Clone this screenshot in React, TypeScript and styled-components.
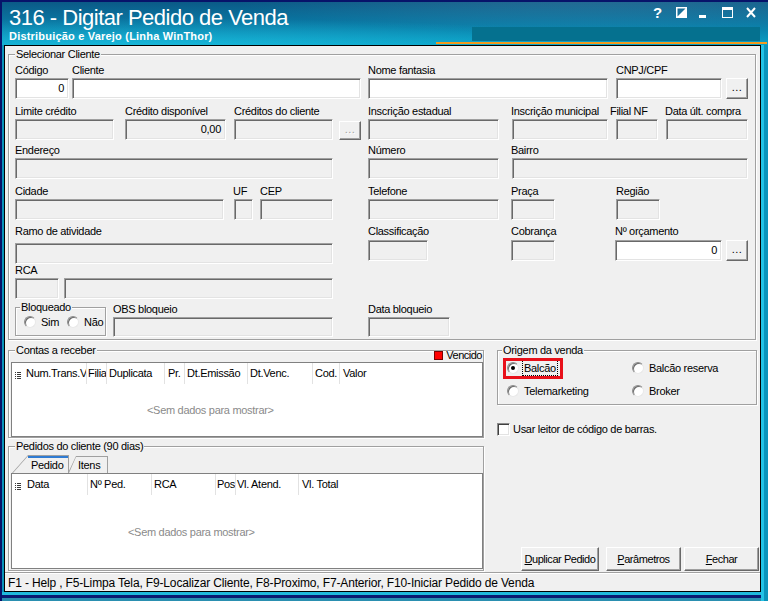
import React from "react";
import styled, { createGlobalStyle, css } from "styled-components";

const GlobalStyle = createGlobalStyle`
  html, body {
    margin: 0;
    padding: 0;
  }
  body {
    background: #0b8db4;
    font-family: "Liberation Sans", Arial, sans-serif;
    font-size: 11px;
    letter-spacing: -0.3px;
    color: #000;
  }
  * {
    box-sizing: border-box;
  }
`;

/* ---------- window chrome ---------- */

const Window = styled.div`
  width: 768px;
  height: 601px;
  overflow: hidden;
  display: flex;
  flex-direction: column;
  border-top: 2px solid #07136a;
  border-left: 2px solid #07136a;
  background:
    linear-gradient(#22c3e6, #22c3e6) 759px 0 / 3px 100% no-repeat,
    #0b94bb;
`;

const TitleBar = styled.div`
  flex: none;
  height: 43px;
  display: flex;
  justify-content: space-between;
  padding: 4px 12px 0 7px;
  color: #fff;
  background:
    linear-gradient(#f39a1e, #f39a1e) 434px 40px / 331px 2px no-repeat,
    linear-gradient(#05718f, #05718f) 470px 25px / 288px 14px no-repeat,
    radial-gradient(ellipse 520px 30px at 140px 46px, rgba(40, 205, 235, 0.55), rgba(40, 205, 235, 0) 100%),
    radial-gradient(ellipse 380px 40px at 600px -8px, rgba(255, 255, 255, 0.12), rgba(255, 255, 255, 0) 100%),
    linear-gradient(180deg, #0b5a87 0%, #0a79a4 50%, #08a0c6 100%);
`;

const TitleTexts = styled.div`
  display: flex;
  flex-direction: column;
`;

const Title = styled.div`
  font-size: 22px;
  line-height: 24px;
  letter-spacing: -0.5px;
`;

const Subtitle = styled.div`
  font-size: 11px;
  line-height: 13px;
  font-weight: bold;
  letter-spacing: 0.2px;
`;

const WinButtons = styled.div`
  display: flex;
  align-items: flex-start;
  margin-top: 1px;
`;

const WinIcon = styled.div<{ $ml?: number; $mt?: number }>`
  display: flex;
  margin-left: ${(p) => p.$ml ?? 0}px;
  margin-top: ${(p) => p.$mt ?? 0}px;
`;

const HelpGlyph = styled.div`
  width: 8px;
  height: 11px;
  font-size: 15px;
  line-height: 12px;
  font-weight: bold;
  letter-spacing: 0;
  text-align: center;
`;

const BottomEdge = styled.div`
  flex: 1;
  margin-right: 7px;
  background: linear-gradient(180deg, #1fb9dc 0 3px, #0a1a72 3px 6px, #2a8fb0 6px);
`;

/* ---------- client area ---------- */

const Client = styled.div`
  flex: none;
  margin-left: 2px;
  width: 757px;
  height: 547px;
  border: 1px solid #000;
  background: #f0f0f0;
  display: flex;
  flex-direction: column;
  padding: 2px 0 0 3px;
`;

const Group = styled.fieldset<{ $w: number; $pad: string; $h?: number; $mt?: number }>`
  flex: none;
  margin: ${(p) => p.$mt ?? 0}px 0 0 0;
  min-width: 0;
  width: ${(p) => p.$w}px;
  ${(p) => p.$h && `height: ${p.$h}px;`}
  padding: ${(p) => p.$pad};
  border: 1px solid #a0a0a0;
  box-shadow: inset 1px 1px 0 #fff, 1px 1px 0 #fff;
`;

const Legend = styled.legend<{ $ml?: number }>`
  padding: 0 1px;
  margin-left: ${(p) => p.$ml ?? 0}px;
  line-height: 13px;
  background: #f0f0f0;
  white-space: nowrap;
`;

const FormCols = styled.div`
  display: flex;
  gap: 7px;
`;

const Col = styled.div<{ $w: number }>`
  width: ${(p) => p.$w}px;
  display: flex;
  flex-direction: column;
`;

const Row = styled.div<{ $mt?: number; $top?: boolean }>`
  display: flex;
  align-items: ${(p) => (p.$top ? "flex-start" : "flex-end")};
  margin-top: ${(p) => p.$mt ?? 0}px;
`;

const FieldBox = styled.div<{ $w: number; $ml: number; $mt: number }>`
  flex: none;
  display: flex;
  flex-direction: column;
  width: ${(p) => p.$w}px;
  margin-left: ${(p) => p.$ml}px;
  margin-top: ${(p) => p.$mt}px;
`;

const Label = styled.div<{ $gap: number; $lx: number }>`
  height: 13px;
  line-height: 13px;
  margin-bottom: ${(p) => p.$gap}px;
  margin-left: ${(p) => p.$lx}px;
  white-space: nowrap;
`;

const Input = styled.div<{ $on?: boolean; $h: number }>`
  height: ${(p) => p.$h}px;
  border: 1px solid;
  border-color: #a0a0a0 #fff #fff #a0a0a0;
  box-shadow: inset 1px 1px 0 #696969, inset -1px -1px 0 #e3e3e3;
  background: ${(p) => (p.$on ? "#fff" : "#f0f0f0")};
  text-align: right;
  padding: 0 4px;
  line-height: ${(p) => p.$h - 2}px;
`;

const raised = css`
  border: 1px solid;
  border-color: #fff #696969 #696969 #fff;
  box-shadow: inset -1px -1px 0 #a0a0a0;
  background: #f0f0f0;
`;

const DotsButton = styled.div<{ $ml: number; $off?: boolean; $h?: number }>`
  ${raised};
  flex: none;
  width: 22px;
  height: ${(p) => p.$h ?? 21}px;
  margin-left: ${(p) => p.$ml}px;
  text-align: center;
  line-height: ${(p) => (p.$h ?? 21) - 4}px;
  letter-spacing: 0.5px;
  color: ${(p) => (p.$off ? "#a0a0a0" : "#000")};
  text-shadow: ${(p) => (p.$off ? "1px 1px 0 #fff" : "none")};
`;

type FieldProps = {
  label?: string;
  w: number;
  ml?: number;
  mt?: number;
  gap?: number;
  h?: number;
  lx?: number;
  on?: boolean;
  value?: string;
};

function Field({ label, w, ml = 0, mt = 0, gap = 1, h = 21, lx = 0, on, value }: FieldProps) {
  return (
    <FieldBox $w={w} $ml={ml} $mt={mt}>
      <Label $gap={gap} $lx={lx}>
        {label}
      </Label>
      <Input $on={on} $h={h}>
        {value}
      </Input>
    </FieldBox>
  );
}

/* ---------- radios & checkbox ---------- */

const RadioRow = styled.div<{ $ml?: number }>`
  display: flex;
  align-items: center;
  height: 16px;
  margin-left: ${(p) => p.$ml ?? 0}px;
  gap: 8px;
`;

const RadioGrid = styled.div`
  display: grid;
  grid-template-columns: 125px auto;
  row-gap: 7px;
  margin-left: 5px;
`;

const RadioItem = styled.div`
  position: relative;
  display: inline-flex;
  align-items: center;
  height: 16px;
  gap: 5px;
  white-space: nowrap;
`;

const RadioDot = styled.span<{ $on?: boolean }>`
  flex: none;
  width: 12px;
  height: 12px;
  border-radius: 50%;
  background: #fff;
  border: 1px solid;
  border-color: #8c8c8c #e8e8e8 #e8e8e8 #8c8c8c;
  box-shadow: inset 1px 1px 0 #6a6a6a;
  display: flex;
  align-items: center;
  justify-content: center;
  &::after {
    content: "";
    width: 4px;
    height: 4px;
    border-radius: 50%;
    background: ${(p) => (p.$on ? "#000" : "transparent")};
  }
`;

const FocusText = styled.span`
  outline: 1px dotted #000;
  outline-offset: 1px;
`;

const Highlight = styled.div`
  position: absolute;
  left: -4px;
  top: -2px;
  width: 60px;
  height: 21px;
  border: 3px solid #e8101a;
`;

const CheckRow = styled.div`
  display: flex;
  align-items: center;
  height: 16px;
  margin-top: 16px;
  gap: 3px;
`;

const CheckBox = styled.span`
  flex: none;
  width: 13px;
  height: 13px;
  background: #fff;
  border: 1px solid;
  border-color: #8c8c8c #fff #fff #8c8c8c;
  box-shadow: inset 1px 1px 0 #404040, inset -1px -1px 0 #e3e3e3;
`;

/* ---------- lower panels ---------- */

const Bottom = styled.div`
  flex: none;
  display: flex;
  height: 228px;
  margin-top: 4px;
`;

const Stack = styled.div<{ $w: number; $ml?: number }>`
  width: ${(p) => p.$w}px;
  margin-left: ${(p) => p.$ml ?? 0}px;
  display: flex;
  flex-direction: column;
`;

const VencidoRow = styled.div`
  display: flex;
  justify-content: flex-end;
  align-items: center;
  height: 12px;
  margin-top: -8px;
  gap: 3px;
  padding-right: 1px;
  letter-spacing: -0.5px;
`;

const RedSquare = styled.span`
  width: 9px;
  height: 9px;
  background: #ff0000;
  border: 1px solid #7a0000;
`;

const Grid = styled.div<{ $h: number; $mt?: number }>`
  flex: none;
  height: ${(p) => p.$h}px;
  margin-top: ${(p) => p.$mt ?? 0}px;
  background: #fff;
  border: 1px solid #808080;
  display: flex;
  flex-direction: column;
`;

const GridHead = styled.div`
  display: flex;
  height: 21px;
`;

const HeadCell = styled.div<{ $w?: number; $pl?: number }>`
  flex: ${(p) => (p.$w ? "none" : "1")};
  width: ${(p) => (p.$w ? `${p.$w}px` : "auto")};
  padding-left: ${(p) => p.$pl ?? 2}px;
  padding-top: 4px;
  line-height: 13px;
  white-space: nowrap;
  overflow: hidden;
  border-right: ${(p) => (p.$w ? "1px solid #e2e2e2" : "none")};
`;

const IconCell = styled.div`
  flex: none;
  width: 12px;
  padding: 7px 0 0 3px;
`;

const Empty = styled.div<{ $pl: number }>`
  flex: 1;
  display: flex;
  align-items: center;
  padding-left: ${(p) => p.$pl}px;
  color: #8a8a8a;
`;

const Tabs = styled.div`
  display: flex;
  align-items: flex-end;
  height: 19px;
  margin-left: 1px;
`;

const Tab = styled.div<{ $w: number; $h: number; $slant: number; $pl: number; $active?: boolean; $ml?: number }>`
  position: relative;
  z-index: ${(p) => (p.$active ? 1 : 0)};
  flex: none;
  width: ${(p) => p.$w}px;
  height: ${(p) => p.$h}px;
  margin-left: ${(p) => p.$ml ?? 0}px;
  padding-left: ${(p) => p.$pl}px;
  background: #a0a0a0;
  clip-path: polygon(0 100%, ${(p) => p.$slant}px 0, 100% 0, 100% 100%);
  &::before {
    content: "";
    position: absolute;
    left: 1px;
    top: 1px;
    right: 1px;
    bottom: 0;
    background: #f0f0f0;
    clip-path: polygon(0 100%, ${(p) => p.$slant - 1}px 0, 100% 0, 100% 100%);
  }
  ${(p) =>
    p.$active &&
    css`
      &::after {
        content: "";
        position: absolute;
        top: 1px;
        left: ${p.$slant}px;
        right: 1px;
        height: 2px;
        background: #2f7bd2;
      }
    `}
`;

const TabText = styled.span<{ $top: number }>`
  position: relative;
  display: block;
  padding-top: ${(p) => p.$top}px;
  line-height: 13px;
`;

const ButtonRow = styled.div`
  display: flex;
  justify-content: flex-end;
  margin-top: auto;
  margin-bottom: 1px;
`;

const PushButton = styled.div<{ $w: number; $ml?: number }>`
  ${raised};
  width: ${(p) => p.$w}px;
  height: 24px;
  margin-left: ${(p) => p.$ml ?? 0}px;
  display: flex;
  align-items: center;
  justify-content: center;
  white-space: nowrap;
  letter-spacing: -0.45px;
  u {
    text-decoration: underline;
  }
`;

const StatusBar = styled.div`
  flex: none;
  height: 19px;
  margin-left: -3px;
  padding: 3px 0 0 3px;
  border-top: 1px solid #a0a0a0;
  box-shadow: inset 0 1px 0 #fff;
  font-size: 12px;
  line-height: 14px;
  letter-spacing: -0.15px;
  white-space: nowrap;
`;

const ListIcon = () => (
  <svg width="6" height="8" viewBox="0 0 6 8">
    {[0, 2, 4, 6].map((y) => (
      <g key={y} fill="#3a3a3a">
        <rect x="0" y={y} width="1" height="1" />
        <rect x="2" y={y} width="4" height="1" />
      </g>
    ))}
  </svg>
);

const contasCols = [
  { t: "Num.Trans.Venda", w: 63 },
  { t: "Filial", w: 20, pl: 1 },
  { t: "Duplicata", w: 58 },
  { t: "Pr.", w: 20, pl: 3 },
  { t: "Dt.Emissão", w: 63 },
  { t: "Dt.Venc.", w: 65 },
  { t: "Cod.", w: 27 },
  { t: "Valor", pl: 3 },
];

const pedidoCols = [
  { t: "Data", w: 64, pl: 3 },
  { t: "Nº Ped.", w: 64 },
  { t: "RCA", w: 64 },
  { t: "Posição", w: 20, pl: 1 },
  { t: "Vl. Atend.", w: 63, pl: 1 },
  { t: "Vl. Total", pl: 3 },
];

export default function App() {
  return (
    <>
      <GlobalStyle />
      <Window>
        <TitleBar>
          <TitleTexts>
            <Title>316 - Digitar Pedido de Venda</Title>
            <Subtitle>Distribuição e Varejo (Linha WinThor)</Subtitle>
          </TitleTexts>
          <WinButtons>
            <HelpGlyph>?</HelpGlyph>
            <WinIcon $ml={15}>
              <svg width="11" height="11" viewBox="0 0 11 11">
                <rect x="0.75" y="0.75" width="9.5" height="9.5" fill="none" stroke="#fff" strokeWidth="1.5" />
                <polygon points="10,1 10,10 1,10" fill="#fff" />
              </svg>
            </WinIcon>
            <WinIcon $ml={12} $mt={8}>
              <svg width="7" height="3" viewBox="0 0 7 3">
                <rect width="7" height="3" fill="#fff" />
              </svg>
            </WinIcon>
            <WinIcon $ml={16}>
              <svg width="11" height="11" viewBox="0 0 11 11">
                <rect x="0.5" y="0.5" width="10" height="10" fill="none" stroke="#fff" strokeWidth="1" />
                <rect x="0" y="0" width="11" height="3" fill="#fff" />
              </svg>
            </WinIcon>
            <WinIcon $ml={13}>
              <svg width="10" height="11" viewBox="0 0 10 11">
                <path d="M1 1 L9 10 M9 1 L1 10" stroke="#fff" strokeWidth="2" />
              </svg>
            </WinIcon>
          </WinButtons>
        </TitleBar>

        <Client>
          <Group $w={748} $pad="3px 6px 2px 6px">
            <Legend>Selecionar Cliente</Legend>
            <FormCols>
              <Col $w={346}>
                <Row>
                  <Field label="Código" w={54} on value="0" />
                  <Field label="Cliente" w={289} ml={3} on />
                </Row>
                <Row $mt={6}>
                  <Field label="Limite crédito" w={99} />
                  <Field label="Crédito disponível" w={101} ml={11} value="0,00" />
                  <Field label="Créditos do cliente" w={99} ml={8} />
                  <DotsButton $ml={6} $h={19} $off>
                    ...
                  </DotsButton>
                </Row>
                <Row $mt={4}>
                  <Field label="Endereço" w={318} />
                </Row>
                <Row $mt={6}>
                  <Field label="Cidade" w={209} />
                  <Field label="UF" w={19} ml={10} lx={-1} />
                  <Field label="CEP" w={73} ml={7} />
                </Row>
                <Row $mt={5}>
                  <Field label="Ramo de atividade" w={318} gap={5} />
                </Row>
                <Row>
                  <Field label="RCA" w={44} />
                  <Field w={269} ml={5} />
                </Row>
                <Row $mt={2} $top>
                  <Group $w={91} $h={35} $pad="0 0 0 4px">
                    <Legend>Bloqueado</Legend>
                    <RadioRow $ml={4}>
                      <RadioItem>
                        <RadioDot />
                        Sim
                      </RadioItem>
                      <RadioItem>
                        <RadioDot />
                        Não
                      </RadioItem>
                    </RadioRow>
                  </Group>
                  <Field label="OBS bloqueio" w={220} ml={7} mt={2} h={20} />
                </Row>
              </Col>

              <Col $w={380}>
                <Row>
                  <Field label="Nome fantasia" w={240} on />
                  <Field label="CNPJ/CPF" w={106} ml={8} on />
                  <DotsButton $ml={4}>...</DotsButton>
                </Row>
                <Row $mt={6}>
                  <Field label="Inscrição estadual" w={131} />
                  <Field label="Inscrição municipal" w={96} ml={13} lx={-1} />
                  <Field label="Filial NF" w={42} ml={8} lx={-6} />
                  <Field label="Data últ. compra" w={82} ml={8} lx={-1} />
                </Row>
                <Row $mt={4}>
                  <Field label="Número" w={131} />
                  <Field label="Bairro" w={236} ml={13} lx={-1} />
                </Row>
                <Row $mt={6}>
                  <Field label="Telefone" w={131} />
                  <Field label="Praça" w={44} ml={12} />
                  <Field label="Região" w={44} ml={61} />
                </Row>
                <Row $mt={5}>
                  <Field label="Classificação" w={60} gap={2} />
                  <Field label="Cobrança" w={44} ml={83} gap={2} />
                  <Field label="Nº orçamento" w={107} ml={60} gap={2} on value="0" />
                  <DotsButton $ml={4}>...</DotsButton>
                </Row>
                <Row $mt={42}>
                  <Field label="Data bloqueio" w={82} h={20} />
                </Row>
              </Col>
            </FormCols>
          </Group>

          <Bottom>
            <Stack $w={476}>
              <Group $w={476} $pad="0 0 0 2px">
                <Legend $ml={4}>Contas a receber</Legend>
                <VencidoRow>
                  <RedSquare />
                  Vencido
                </VencidoRow>
                <Grid $h={75} $mt={1}>
                  <GridHead>
                    <IconCell>
                      <ListIcon />
                    </IconCell>
                    {contasCols.map((c) => (
                      <HeadCell key={c.t} $w={c.w} $pl={c.pl}>
                        {c.t}
                      </HeadCell>
                    ))}
                  </GridHead>
                  <Empty $pl={135}>&lt;Sem dados para mostrar&gt;</Empty>
                </Grid>
              </Group>

              <Group $w={476} $pad="1px 0 1px 2px" $mt={2}>
                <Legend $ml={4}>Pedidos do cliente (90 dias)</Legend>
                <Tabs>
                  <Tab $w={57} $h={18} $slant={16} $pl={19} $active>
                    <TabText $top={4}>Pedido</TabText>
                  </Tab>
                  <Tab $w={40} $h={17} $slant={8} $pl={10} $ml={-1}>
                    <TabText $top={3}>Itens</TabText>
                  </Tab>
                </Tabs>
                <Grid $h={96}>
                  <GridHead>
                    <IconCell>
                      <ListIcon />
                    </IconCell>
                    {pedidoCols.map((c) => (
                      <HeadCell key={c.t} $w={c.w} $pl={c.pl}>
                        {c.t}
                      </HeadCell>
                    ))}
                  </GridHead>
                  <Empty $pl={116}>&lt;Sem dados para mostrar&gt;</Empty>
                </Grid>
              </Group>
            </Stack>

            <Stack $w={262} $ml={13}>
              <Group $w={260} $pad="3px 0 5px 4px">
                <Legend>Origem da venda</Legend>
                <RadioGrid>
                  <RadioItem>
                    <RadioDot $on />
                    <FocusText>Balcão</FocusText>
                    <Highlight />
                  </RadioItem>
                  <RadioItem>
                    <RadioDot />
                    Balcão reserva
                  </RadioItem>
                  <RadioItem>
                    <RadioDot />
                    Telemarketing
                  </RadioItem>
                  <RadioItem>
                    <RadioDot />
                    Broker
                  </RadioItem>
                </RadioGrid>
              </Group>
              <CheckRow>
                <CheckBox />
                Usar leitor de código de barras.
              </CheckRow>
              <ButtonRow>
                <PushButton $w={78}>
                  <span>
                    <u>D</u>uplicar Pedido
                  </span>
                </PushButton>
                <PushButton $w={75} $ml={7}>
                  <span>
                    <u>P</u>arâmetros
                  </span>
                </PushButton>
                <PushButton $w={75} $ml={3}>
                  <span>
                    <u>F</u>echar
                  </span>
                </PushButton>
              </ButtonRow>
            </Stack>
          </Bottom>

          <StatusBar>
            F1 - Help , F5-Limpa Tela, F9-Localizar Cliente, F8-Proximo, F7-Anterior, F10-Iniciar Pedido de Venda
          </StatusBar>
        </Client>
        <BottomEdge />
      </Window>
    </>
  );
}
